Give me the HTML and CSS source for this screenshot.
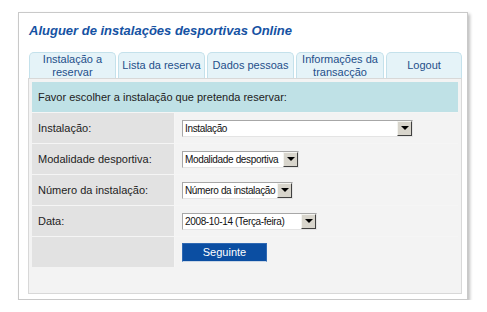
FILE: index.html
```html
<!DOCTYPE html>
<html>
  <head>
    <title>Aluguer de instalações desportivas Online</title>
    <link rel="stylesheet" href="styles.css">
  </head>
  <body>
    <div class="frame">
      <h1 class="title">Aluguer de instalações desportivas Online</h1>

      <div class="tabs">
        <div class="tab tab-wide">Instalação a<br>reservar</div>
        <div class="tab tab-wide">Lista da reserva</div>
        <div class="tab tab-wide">Dados pessoas</div>
        <div class="tab tab-info">Informações da<br>transacção</div>
        <div class="tab tab-logout">Logout</div>
      </div>

      <div class="panel">
        <div class="form-grid">
          <div class="intro">Favor escolher a instalação que pretenda reservar:</div>

          <div class="label">Instalação:</div>
          <div class="field">
            <div class="select select-1">
              <span class="select-value">Instalação</span>
              <span class="select-arrow"><span class="triangle"></span></span>
            </div>
          </div>

          <div class="label">Modalidade desportiva:</div>
          <div class="field">
            <div class="select select-2">
              <span class="select-value">Modalidade desportiva</span>
              <span class="select-arrow"><span class="triangle"></span></span>
            </div>
          </div>

          <div class="label">Número da instalação:</div>
          <div class="field">
            <div class="select select-3">
              <span class="select-value">Número da instalação</span>
              <span class="select-arrow"><span class="triangle"></span></span>
            </div>
          </div>

          <div class="label">Data:</div>
          <div class="field">
            <div class="select select-4">
              <span class="select-value">2008-10-14 (Terça-feira)</span>
              <span class="select-arrow"><span class="triangle"></span></span>
            </div>
          </div>

          <div class="label"></div>
          <div class="field">
            <button class="next-button">Seguinte</button>
          </div>
        </div>
      </div>
    </div>
  </body>
</html>
```

FILE: styles.css
```css
body {
  margin: 0;
  background-color: #ffffff;
  font-family: "Liberation Sans", Arial, sans-serif;
  font-size: 11px;
  color: #222222;
}
.frame {
  box-sizing: border-box;
  width: 450px;
  height: 288px;
  margin: 12px 0 0 18px;
  padding: 9px 5px 0 9px;
  background-color: #ffffff;
  border: 1px solid #c9c9c9;
  box-shadow: 2px 2px 3px rgba(0, 0, 0, 0.25);
}
.title {
  margin: 0 0 12px 1px;
  font-size: 13px;
  font-style: italic;
  font-weight: bold;
  line-height: 18px;
  color: #1552a3;
}
.tabs {
  display: flex;
  gap: 2px;
  margin-left: 1px;
}
.tab {
  box-sizing: border-box;
  height: 26px;
  display: flex;
  align-items: center;
  justify-content: center;
  text-align: center;
  line-height: 13px;
  color: #1f4f8a;
  background-color: #e5f3f8;
  border: 1px solid #c4e1eb;
  border-bottom: none;
  border-radius: 5px 5px 0 0;
}
.tab-wide {
  width: 87px;
}
.tab-info {
  width: 88px;
}
.tab-logout {
  width: 76px;
}
.panel {
  box-sizing: border-box;
  width: 434px;
  height: 216px;
  padding: 3px;
  background-color: #f3f3f3;
  border: 1px solid #d8d8d8;
}
.form-grid {
  display: grid;
  grid-template-columns: 142px 1fr;
  grid-auto-rows: 30px;
  gap: 1px;
  background-color: #f5f5f5;
}
.intro {
  grid-column: 1 / 3;
  display: flex;
  align-items: center;
  padding-left: 6px;
  background-color: #bfe1e6;
}
.label {
  display: flex;
  align-items: center;
  padding-left: 6px;
  background-color: #e2e2e2;
}
.field {
  display: flex;
  align-items: center;
  padding-left: 7px;
  background-color: #f3f3f3;
}
.select {
  box-sizing: border-box;
  height: 17px;
  display: flex;
  align-items: center;
  background-color: #ffffff;
  border: 1px solid #a7a7a7;
  border-right-color: #e4e4e4;
  border-bottom-color: #e4e4e4;
  font-size: 10px;
  letter-spacing: -0.35px;
  color: #111111;
}
.select-1 {
  width: 231px;
}
.select-2 {
  width: 117px;
}
.select-3 {
  width: 111px;
}
.select-4 {
  width: 135px;
}
.select-value {
  flex: 1;
  padding-left: 2px;
  white-space: nowrap;
  overflow: hidden;
}
.select-arrow {
  box-sizing: border-box;
  width: 15px;
  height: 15px;
  display: flex;
  align-items: center;
  justify-content: center;
  background-color: #d8d5cc;
  border: 1px solid #f4f4f0;
  border-right-color: #404040;
  border-bottom-color: #404040;
}
.triangle {
  width: 0;
  height: 0;
  border-left: 4px solid transparent;
  border-right: 4px solid transparent;
  border-top: 4px solid #000000;
}
.next-button {
  width: 85px;
  height: 19px;
  padding: 0;
  font-family: "Liberation Sans", Arial, sans-serif;
  font-size: 11px;
  color: #ffffff;
  background-color: #0b4ea2;
  border: 1px solid #2f69b3;
  border-bottom-color: #c9d6e6;
}
```
